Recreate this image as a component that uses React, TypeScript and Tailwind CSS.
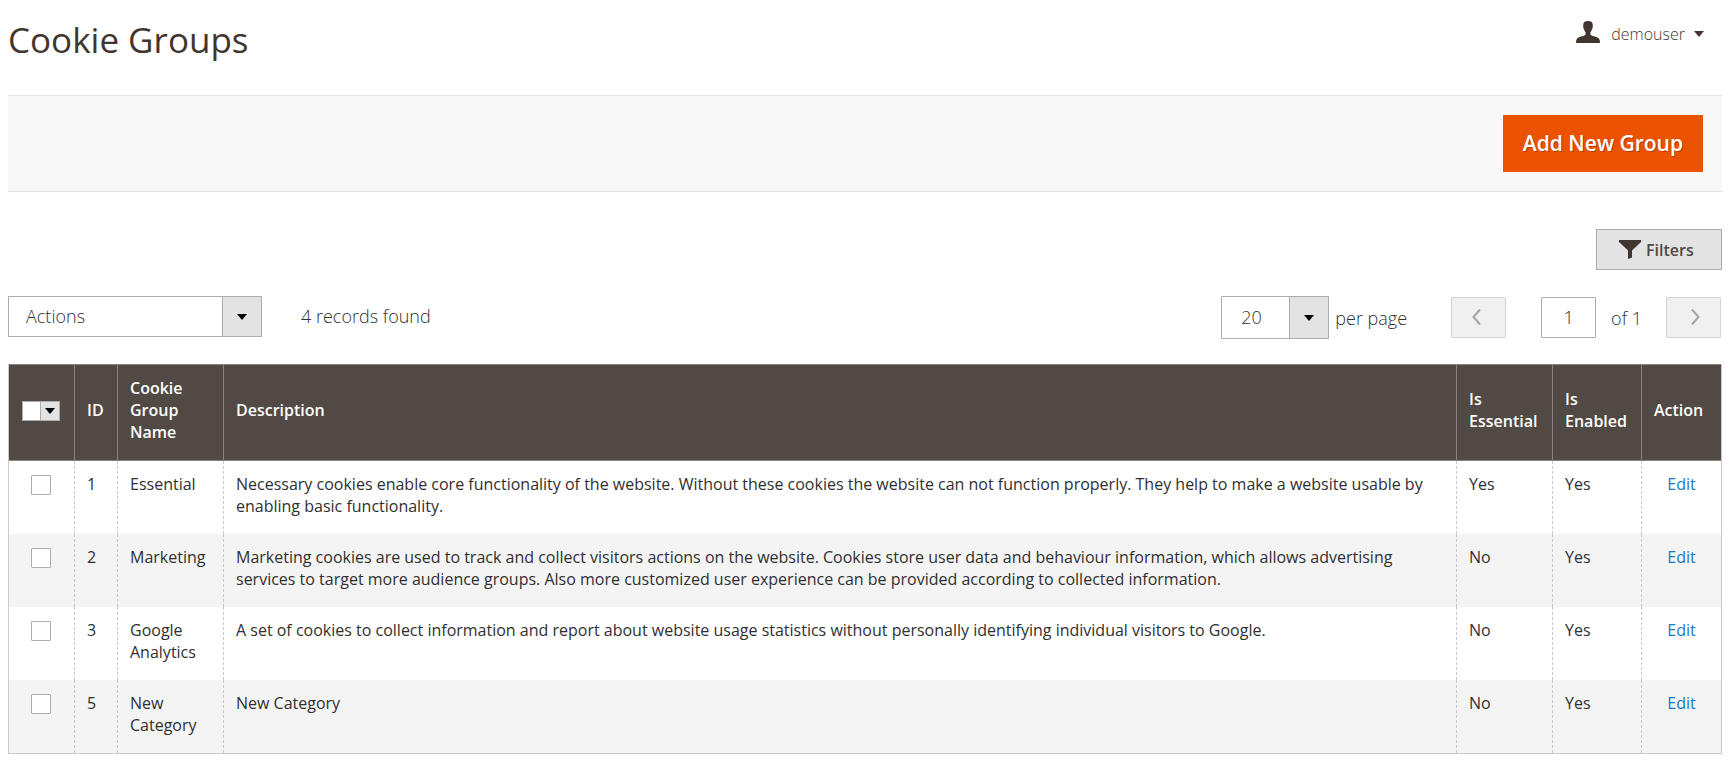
import clsx from "clsx";

interface CookieGroup {
  id: number;
  name: string;
  description: string;
  essential: boolean;
  enabled: boolean;
}

const groups: CookieGroup[] = [
  {
    id: 1,
    name: "Essential",
    description:
      "Necessary cookies enable core functionality of the website. Without these cookies the website can not function properly. They help to make a website usable by enabling basic functionality.",
    essential: true,
    enabled: true,
  },
  {
    id: 2,
    name: "Marketing",
    description:
      "Marketing cookies are used to track and collect visitors actions on the website. Cookies store user data and behaviour information, which allows advertising services to target more audience groups. Also more customized user experience can be provided according to collected information.",
    essential: false,
    enabled: true,
  },
  {
    id: 3,
    name: "Google Analytics",
    description:
      "A set of cookies to collect information and report about website usage statistics without personally identifying individual visitors to Google.",
    essential: false,
    enabled: true,
  },
  {
    id: 5,
    name: "New Category",
    description: "New Category",
    essential: false,
    enabled: true,
  },
];

const columns = [
  { label: "ID", width: "w-[43px]" },
  { label: "Cookie Group Name", width: "w-[106px]" },
  { label: "Description", width: "" },
  { label: "Is Essential", width: "w-[96px]" },
  { label: "Is Enabled", width: "w-[89px]" },
  { label: "Action", width: "w-[80px]" },
];

function Caret({ className }: { className?: string }) {
  return (
    <svg className={clsx("h-[6px] w-[10px]", className)} viewBox="0 0 10 6" fill="currentColor" aria-hidden="true">
      <path d="M0 0h10L5 6z" />
    </svg>
  );
}

function SelectArrow() {
  return (
    <span className="pointer-events-none absolute inset-y-0 right-0 flex w-10 items-center justify-center border border-[#adadad] bg-[#e3e3e3] text-black">
      <Caret />
    </span>
  );
}

function Chevron({ flip }: { flip?: boolean }) {
  return (
    <svg
      className={clsx("h-4 w-[9px]", flip && "-scale-x-100")}
      viewBox="0 0 9 16"
      fill="none"
      stroke="currentColor"
      strokeWidth={2}
      aria-hidden="true"
    >
      <path d="M8 0.500L1.500 8L8 15.500" />
    </svg>
  );
}

function Header() {
  return (
    <header className="flex items-start justify-between pr-[18px]">
      <h1 className="pt-4 text-[35px] leading-[48px] text-[#41362f]">Cookie Groups</h1>
      <button type="button" className="mt-[22px] flex items-center text-base leading-6 font-[350] text-[#41362f]">
        <svg className="mr-[11px] -mt-1 h-[22px] w-6" viewBox="0 0 24 22" fill="#41362f" aria-hidden="true">
          <path d="M12 0C9 0 7.300 1 7.300 3.500V5.500C7 6.500 7.400 7.500 8 8C8.300 9.500 9 10.800 9.600 11.500V13.500C9 14.800 6 15.300 3 16.300C.8 17.200 0 18.500 0 22H24C24 18.500 23.200 17.200 21 16.300C18 15.300 15 14.800 14.400 13.500V11.500C15 10.800 15.700 9.500 16 8C16.600 7.500 17 6.500 16.700 5.500V3.500C16.700 1 15 0 12 0Z" />
        </svg>
        demouser
        <Caret className="ml-[9px]" />
      </button>
    </header>
  );
}

function Pager() {
  return (
    <div className="flex items-center pr-px text-lg font-[350]">
      <label className="flex items-center gap-[6px]">
        <span className="relative">
          <select
            aria-label="Records per page"
            defaultValue="20"
            className="block h-[43px] w-[108px] appearance-none rounded-[1px] border border-[#adadad] bg-white pb-px pl-[19px] outline-none"
          >
            <option>20</option>
            <option>30</option>
            <option>50</option>
          </select>
          <SelectArrow />
        </span>
        per page
      </label>
      <button
        type="button"
        disabled
        aria-label="Previous page"
        className="ml-11 flex h-[41px] w-[55px] items-center justify-center rounded-[1px] border border-[#d3d3d3] bg-[#f0f0f0] pr-1 pb-[2px] text-[#a5a3a1]"
      >
        <Chevron />
      </button>
      <label className="ml-[35px] flex items-center gap-[15px]">
        <input
          type="text"
          aria-label="Current page"
          defaultValue="1"
          className="h-[41px] w-[55px] rounded-[1px] border border-[#adadad] bg-white pb-px text-center outline-none"
        />
        of 1
      </label>
      <button
        type="button"
        disabled
        aria-label="Next page"
        className="ml-6 flex h-[41px] w-[55px] items-center justify-center rounded-[1px] border border-[#d3d3d3] bg-[#f0f0f0] pb-[2px] pl-1 text-[#a5a3a1]"
      >
        <Chevron flip />
      </button>
    </div>
  );
}

function GroupRow({ group }: { group: CookieGroup }) {
  const cell = "border-l border-dashed border-[#cacaca] px-3 pt-3 pb-[17px]";

  return (
    <tr className="align-top even:bg-[#f4f4f4]">
      <td className="pt-[14px] pr-[2px]">
        <input
          type="checkbox"
          aria-label={`Select ${group.name}`}
          className="mx-auto block size-5 appearance-none rounded-[1px] border border-[#adadad] bg-white"
        />
      </td>
      <td className={cell}>{group.id}</td>
      <td className={cell}>{group.name}</td>
      <td className={cell}>{group.description}</td>
      <td className={cell}>{group.essential ? "Yes" : "No"}</td>
      <td className={cell}>{group.enabled ? "Yes" : "No"}</td>
      <td className={clsx(cell, "text-center")}>
        <a href="#" className="text-[#1979c3]">
          Edit
        </a>
      </td>
    </tr>
  );
}

function GroupTable() {
  return (
    <div className="mt-[25px] border border-t-0 border-[#cacaca]">
      <table className="-mx-px w-[calc(100%+2px)] table-fixed border-separate border-spacing-0 border-x border-transparent text-base leading-[22px]">
        <thead className="bg-[#514943] text-left text-white">
          <tr>
            <th className="w-[65px] border-y border-[#8a837f] pr-[2px] pb-1">
              <div className="mx-auto flex h-5 w-[38px]">
                <input
                  type="checkbox"
                  aria-label="Select all"
                  className="h-5 w-[19px] appearance-none border border-[#adadad] bg-white"
                />
                <button
                  type="button"
                  aria-label="Selection options"
                  className="flex h-5 w-[19px] items-center justify-center border-y border-r border-[#adadad] bg-[#e3e3e3] text-black"
                >
                  <Caret />
                </button>
              </div>
            </th>
            {columns.map((column) => (
              <th
                key={column.label}
                className={clsx("border-y border-l border-[#8a837f] px-3 pt-3 pb-[17px] font-semibold", column.width)}
              >
                {column.label}
              </th>
            ))}
          </tr>
        </thead>
        <tbody>
          {groups.map((group) => (
            <GroupRow key={group.id} group={group} />
          ))}
        </tbody>
      </table>
    </div>
  );
}

export default function App() {
  return (
    <main className="bg-white pr-[7px] pl-2 font-['Open_Sans',sans-serif] text-[#303030]">
      <Header />

      <div className="mt-[31px] flex justify-end border-y border-[#e3e3e3] bg-[#f8f8f8] py-[19px] pr-[19px]">
        <button
          type="button"
          className="h-[57px] bg-[#eb5202] px-5 text-[21px] font-semibold text-white [text-shadow:1px_1px_0_rgba(0,0,0,0.25)]"
        >
          Add New Group
        </button>
      </div>

      <div className="mt-[37px] flex justify-end">
        <button
          type="button"
          className="flex h-[41px] w-[126px] items-center gap-[5px] border border-[#adadad] bg-[#e3e3e3] pl-[22px] text-base font-semibold text-[#514943]"
        >
          <svg className="h-[19px] w-[22px]" viewBox="0 0 22 19" fill="#41362f" aria-hidden="true">
            <path d="M0 0H22V2L13 10.500V17.500L9 19V10.500L0 2Z" />
          </svg>
          Filters
        </button>
      </div>

      <div className="mt-[26px] flex items-start justify-between">
        <div className="flex items-center gap-[39px] text-lg font-[350]">
          <div className="relative">
            <select
              aria-label="Actions"
              className="block h-[41px] w-[254px] appearance-none border border-[#adadad] bg-white pb-px pl-[17px] outline-none"
            >
              <option>Actions</option>
              <option>Delete</option>
            </select>
            <SelectArrow />
          </div>
          <span className="pb-px">4 records found</span>
        </div>
        <Pager />
      </div>

      <GroupTable />
    </main>
  );
}
